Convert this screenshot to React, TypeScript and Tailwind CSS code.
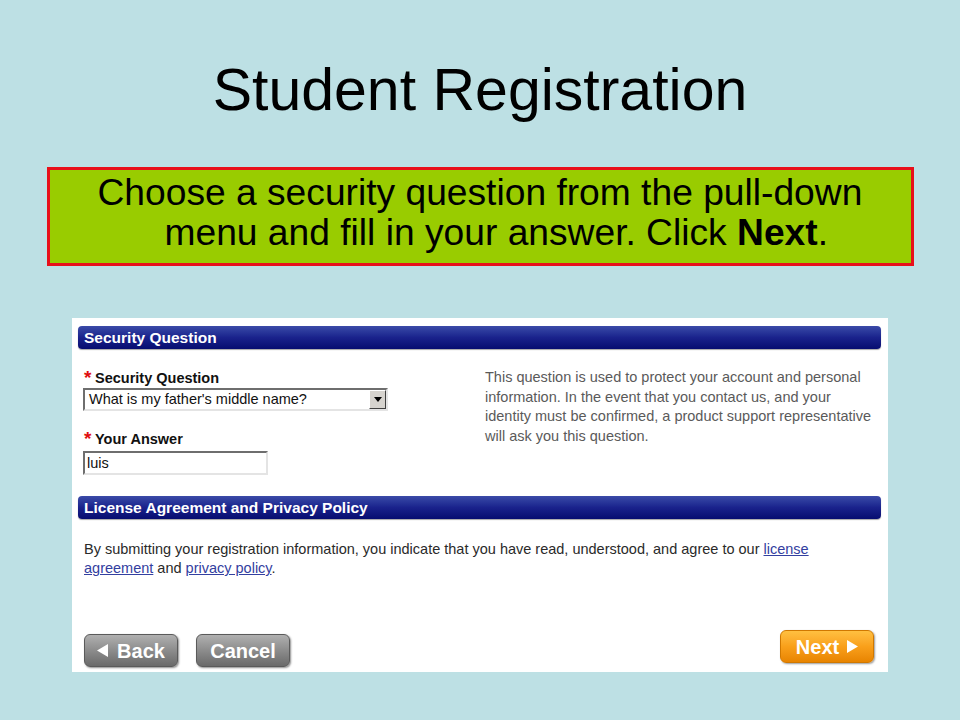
const font = { fontFamily: '"Liberation Sans", Arial, Helvetica, sans-serif' };

function SectionBar({ title }: { title: string }) {
  return (
    <div className="h-[23px] rounded-[4px] bg-linear-to-b from-[#3b4aa8] via-[#1a228c] to-[#070c70] pl-[6px] flex items-center shadow-[0_1px_1px_rgba(0,0,0,0.35)]">
      <span className="text-white font-bold text-[15.5px] leading-none">{title}</span>
    </div>
  );
}

function Label({ text }: { text: string }) {
  return (
    <div className="flex items-start h-[16px] leading-[16px] text-[14.5px] font-bold text-[#111]">
      <span className="text-[#e01010] text-[19px] leading-[15px] w-[12px] pl-[1px]">*</span>
      <span>{text}</span>
    </div>
  );
}

function Tri({ dir }: { dir: "left" | "right" }) {
  return (
    <svg width="11" height="13" viewBox="0 0 11 13" className="shrink-0">
      {dir === "left" ? <polygon points="11,0 11,13 0,6.5" fill="white" /> : <polygon points="0,0 0,13 11,6.5" fill="white" />}
    </svg>
  );
}

export default function App() {
  return (
    <div className="w-[960px] h-[720px] bg-[#bde0e4] flex flex-col items-center overflow-hidden" style={font}>
      <h1 className="mt-[61px] text-[59px] leading-[58px] text-black font-normal">Student Registration</h1>

      <div className="mt-[48px] w-[867px] h-[99px] border-[3px] border-[#e8101a] bg-[#99cc00] text-[37.2px] leading-[40px] text-black pt-[2px]">
        <div className="ml-[48px] whitespace-nowrap">Choose a security question from the pull-down</div>
        <div className="ml-[115px] whitespace-nowrap">
          menu and fill in your answer. Click <b>Next</b>.
        </div>
      </div>

      <div className="mt-[52px] w-[816px] h-[354px] bg-white pt-[8px] pl-[6px] pr-[7px] flex flex-col">
        <SectionBar title="Security Question" />

        <div className="flex">
          <div className="w-[407px] pl-[5px] pt-[21px]">
            <Label text="Security Question" />
            <div className="mt-[2px] w-[305px] h-[23px] border-2 border-t-[#6e6e6e] border-l-[#6e6e6e] border-r-[#e4e4e4] border-b-[#e4e4e4] flex items-center bg-white">
              <span className="flex-1 pl-[4px] text-[14.5px] text-[#111] leading-none">What is my father's middle name?</span>
              <div className="w-[17px] h-[19px] bg-[#d6d3ce] border border-t-white border-l-white border-r-[#404040] border-b-[#404040] flex items-center justify-center">
                <svg width="8" height="5" viewBox="0 0 8 5">
                  <polygon points="0,0 8,0 4,5" fill="black" />
                </svg>
              </div>
            </div>
            <div className="mt-[20px]">
              <Label text="Your Answer" />
            </div>
            <div className="mt-[4px] w-[185px] h-[24px] border-2 border-t-[#6e6e6e] border-l-[#6e6e6e] border-r-[#e4e4e4] border-b-[#e4e4e4] flex items-center bg-white">
              <span className="pl-[2px] text-[14.5px] text-[#111] leading-none">luis</span>
            </div>
          </div>
          <p className="pt-[19px] w-[388px] text-[14.5px] leading-[19.5px] text-[#5a5a5a]">
            This question is used to protect your account and personal information. In the event that you contact us, and your identity must be confirmed, a product support representative will ask you this question.
          </p>
        </div>

        <div className="mt-[21px]">
          <SectionBar title="License Agreement and Privacy Policy" />
        </div>

        <p className="mt-[21px] pl-[6px] pr-[40px] text-[14.5px] leading-[19px] text-[#2a2a2a]">
          By submitting your registration information, you indicate that you have read, understood, and agree to our{" "}
          <span className="text-[#3340a0] underline">license agreement</span> and{" "}
          <span className="text-[#3340a0] underline">privacy policy</span>.
        </p>

        <div className="mt-auto mb-[5px] flex justify-between items-start pl-[6px] pr-[7px]">
          <div className="flex gap-[18px] mt-[4px]">
            <div className="w-[94px] h-[33px] rounded-[6px] bg-linear-to-b from-[#b0b0b0] via-[#8c8c8c] to-[#6a6a6a] border border-[#5a5a5a] shadow-[1px_1px_2px_rgba(0,0,0,0.45)] flex items-center justify-center gap-[9px] text-white font-bold text-[20px]">
              <Tri dir="left" />
              <span>Back</span>
            </div>
            <div className="w-[94px] h-[33px] rounded-[6px] bg-linear-to-b from-[#b0b0b0] via-[#8c8c8c] to-[#6a6a6a] border border-[#5a5a5a] shadow-[1px_1px_2px_rgba(0,0,0,0.45)] flex items-center justify-center text-white font-bold text-[20px]">
              Cancel
            </div>
          </div>
          <div className="w-[94px] h-[33px] rounded-[6px] bg-linear-to-b from-[#ffc040] via-[#f9a01a] to-[#e88400] border border-[#d07800] shadow-[1px_1px_2px_rgba(0,0,0,0.4)] flex items-center justify-center gap-[8px] text-white font-bold text-[20px]">
            <span>Next</span>
            <Tri dir="right" />
          </div>
        </div>
      </div>
    </div>
  );
}
